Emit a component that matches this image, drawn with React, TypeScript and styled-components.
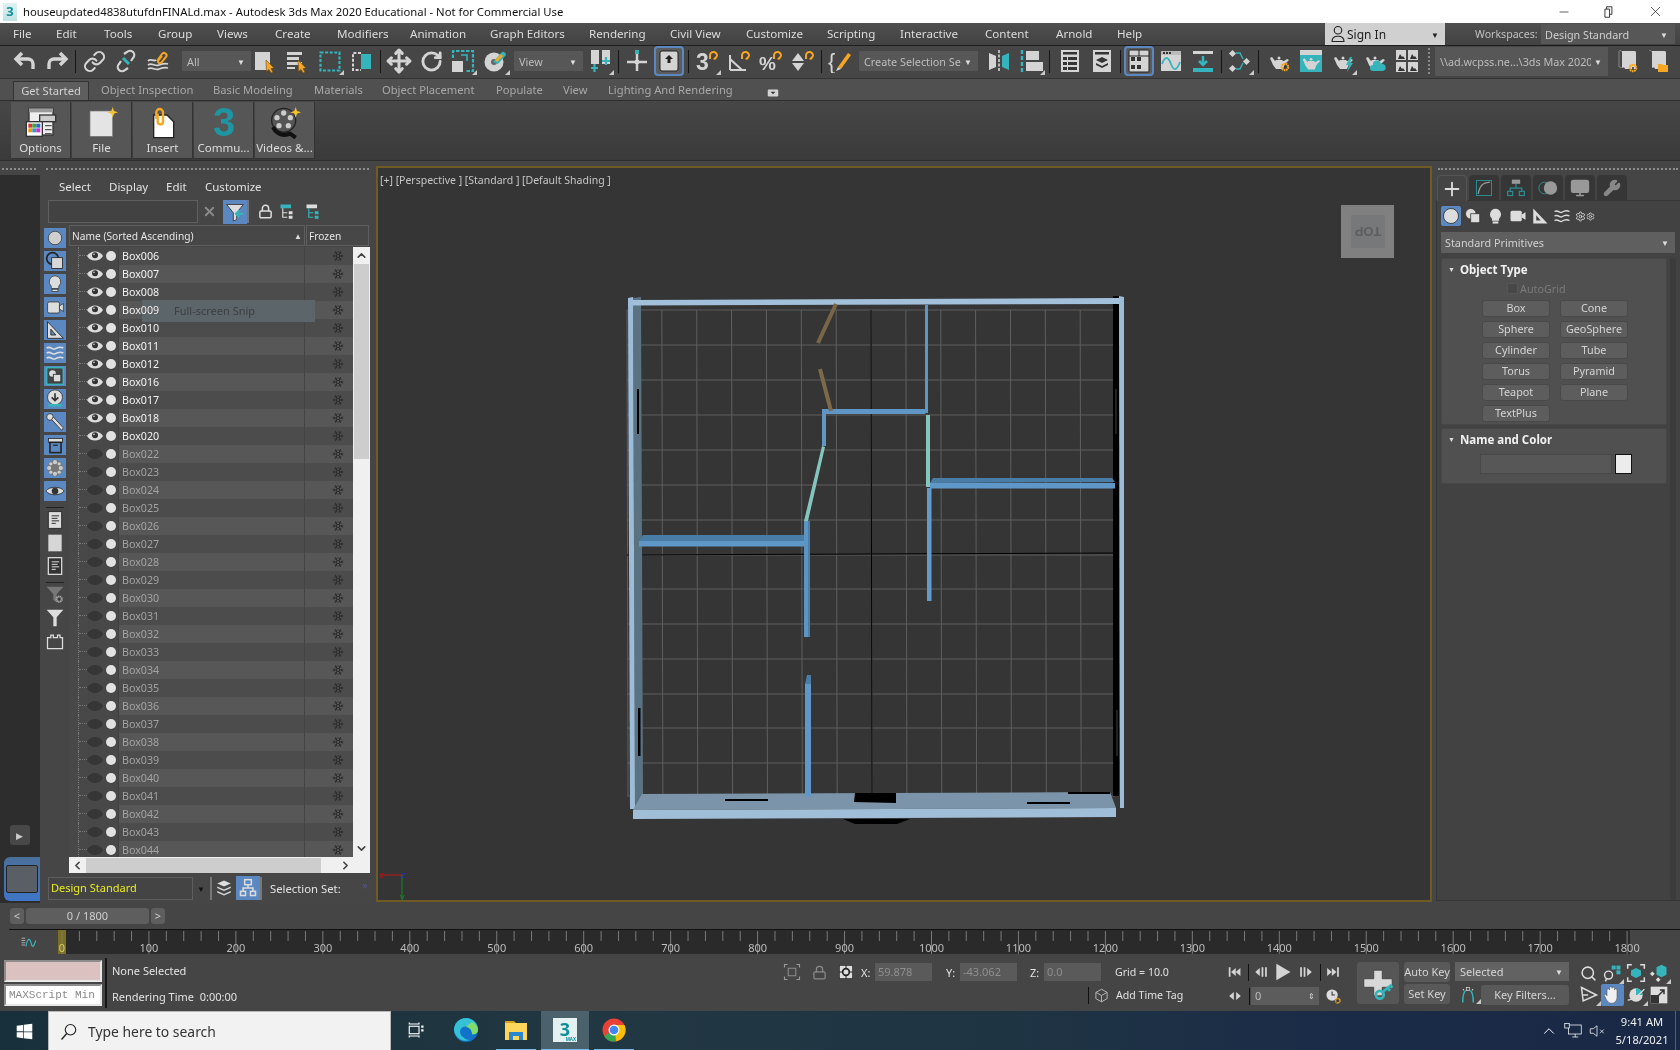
import React from 'react';
import styled, { createGlobalStyle } from 'styled-components';
import { Snowflake, Search, Minus, X, Link as LinkIcon, Move, RotateCw, ChevronUp, ChevronDown, ChevronLeft, ChevronRight, Wrench, Plus, Lock, Settings, Monitor } from 'lucide-react';

const UI = `"Noto Sans", "Open Sans", sans-serif`;
const C = '#d4d4d4';
const T = '#35b5bb';
const O = '#f5a623';

const Global = createGlobalStyle`
  html, body { margin: 0; padding: 0; background: #454545; overflow: hidden; }
  body { font-family: ${UI}; }
  * { box-sizing: border-box; }
`;

const Page = styled.div`
  width: 1680px; height: 1050px; display: flex; flex-direction: column; overflow: hidden; background: #454545;
`;
const IconSvg = styled.svg<{ $s: number }>`
  width: ${p => p.$s}px; height: ${p => p.$s}px; display: block; flex: none;
`;
const Ic = ({ s = 24, children }: { s?: number; children: React.ReactNode }) => (
  <IconSvg $s={s} viewBox="0 0 24 24">{children}</IconSvg>
);

/* ---------- title bar ---------- */
const TitleBar = styled.div`
  height: 23px; background: #fff; display: flex; align-items: center; padding: 0 13px 0 3px; flex: none;
`;
const TitleText = styled.div`
  margin-left: 6px; font-size: 11.3px; color: #111; white-space: nowrap; flex: 1;
`;
const WinBtn = styled.div<{ $ml?: number }>`
  width: 24px; display: flex; justify-content: center; margin-left: ${p => p.$ml ?? 21}px; color: #222;
`;
const Logo3 = styled.div`
  width: 14px; height: 18px; background: linear-gradient(#dff1f1, #bfe3e4); color: #128f99; font: bold 13px/17px ${UI}; text-align: center;
`;

/* ---------- menu ---------- */
const MenuBar = styled.div`
  height: 23px; background: linear-gradient(#4f4f4f, #424242); display: flex; align-items: center; padding-left: 13px; border-bottom: 1px solid #1e1e1e; flex: none;
`;
const MenuItem = styled.div<{ $w: number }>`
  width: ${p => p.$w}px; font-size: 11.6px; color: #dcdcdc; white-space: nowrap; padding-bottom: 2px;
`;
const SignIn = styled.div`
  margin-left: 168px; width: 120px; height: 22px; background: #d0d0d0; color: #222; display: flex; align-items: center; padding-left: 4px; font-size: 12px; align-self: flex-start; flex: none;
`;
const SignCaret = styled.span`
  margin-left: auto; margin-right: 6px; font-size: 8px;
`;
const WorkLabel = styled.div`
  margin-left: 30px; font-size: 10.6px; color: #c0c0c0; white-space: nowrap; width: 66px; flex: none;
`;
const WorkCombo = styled.div`
  width: 134px; height: 20px; background: #575757; color: #cfcfcf; font-size: 10.8px; display: flex; align-items: center; padding: 0 7px 0 4px; justify-content: space-between; flex: none;
`;

/* ---------- main toolbar ---------- */
const ToolBar = styled.div`
  height: 33px; background: #464646; display: flex; align-items: center; gap: 4px; padding: 0 0 2px 11px; flex: none; border-bottom: 1px solid #333;
`;
const Grip = styled.div<{ $ml?: number }>`
  width: 2px; height: 26px; border-left: 2px dotted #8a8a8a; margin-left: ${p => p.$ml ?? 0}px;
`;
const Tool = styled.div<{ $ml?: number; $on?: boolean }>`
  width: 28px; height: 28px; flex: none; display: flex; align-items: center; justify-content: center; margin-left: ${p => p.$ml ?? 0}px; position: relative;
  ${p => p.$on ? 'background:#5c5c5c; outline: 2px solid #5b88c0; outline-offset: -1px; border-radius: 3px;' : ''}
`;
const Corner = styled.span`
  position: absolute; right: 0; bottom: 0; width: 0; height: 0; border-left: 5px solid transparent; border-bottom: 5px solid #c9c9c9;
`;
const Sep = styled.div<{ $ml?: number }>`
  width: 1px; height: 23px; background: #161616; flex: none; margin-left: ${p => p.$ml ?? 0}px;
`;
const Combo = styled.div<{ $w: number; $ml?: number; $h?: number }>`
  width: ${p => p.$w}px; height: ${p => p.$h ?? 20}px; background: #575757; color: #bdbdbd; font-size: 10.8px; display: flex; align-items: center; justify-content: space-between; padding: 0 6px 0 5px; flex: none; border-radius: 1px;
  margin-left: ${p => p.$ml ?? 0}px; margin-right: -4px; white-space: nowrap; overflow: hidden;
`;
const ClipText = styled.span`
  flex: 1; overflow: hidden; white-space: nowrap;
`;
const Caret = styled.span`
  font-size: 8px; color: #ddd; flex: none; margin-left: 3px;
`;
const More = styled.div`
  color: #ccc; font-size: 10px; margin-left: 8px;
`;

/* ---------- ribbon ---------- */
const RibbonTabs = styled.div`
  height: 22px; background: #505050; display: flex; align-items: flex-end; padding-left: 13px; border-bottom: 1px solid #2e2e2e; flex: none;
`;
const RibTab = styled.div<{ $w: number; $on?: boolean }>`
  width: ${p => p.$w}px; height: 19px; font-size: 11.2px; line-height: 18px; white-space: nowrap; color: ${p => p.$on ? '#d2d2d2' : '#a8a8a8'};
  ${p => p.$on ? 'background:#5e5e5e; text-align:center; border: 1px solid #333; border-bottom: none;' : ''}
`;
const RibbonBody = styled.div`
  height: 60px; background: linear-gradient(#474747, #3a3a3a); display: flex; gap: 1px; padding: 1px 0 0 11px; flex: none; border-bottom: 1px solid #2e2e2e;
`;
const RibBtn = styled.div`
  width: 60px; height: 57px; background: #565656; display: flex; flex-direction: column; align-items: center; border-right: 1px solid #333; border-bottom: 1px solid #333;
`;
const RibIcon = styled.div`
  height: 36px; display: flex; align-items: center; justify-content: center; padding-top: 5px;
`;
const RibLabel = styled.div`
  font-size: 11.5px; color: #dedede; margin-top: 2px; white-space: nowrap;
`;

/* ---------- main ---------- */
const Main = styled.div`
  height: 744px; display: flex; flex: none;
`;
const DockL = styled.div`
  width: 371px; display: flex; flex-direction: column; flex: none;
`;
const GripRow = styled.div`
  height: 14px; display: flex; gap: 10px; padding: 7px 2px 0; flex: none;
`;
const GripLine = styled.div<{ $w?: number }>`
  ${p => p.$w ? `width:${p.$w}px;` : 'flex:1;'} height: 2px; border-top: 2px dotted #8e8e8e;
`;
const DockBody = styled.div`
  display: flex; height: 728px;
`;
const DarkStrip = styled.div`
  width: 40px; background: #2d2d2d; display: flex; flex-direction: column; align-items: center; justify-content: flex-end;
`;
const ExpandBtn = styled.div`
  width: 20px; height: 20px; background: #484848; border-radius: 3px; display: flex; align-items: center; justify-content: center; color: #ccc; font-size: 9px; margin-bottom: 12px; margin-left: -1px;
`;
const Thumb = styled.div`
  width: 36px; height: 44px; margin: 0 0 2px 4px; border-radius: 6px 0 0 6px; background: linear-gradient(#4a6f9a, #3f76c6); display: flex; align-items: flex-start; justify-content: center; padding: 8px 0 0 0;
`;
const ThumbInner = styled.div`
  width: 32px; height: 28px; background: #5a5f66; border: 1px solid #222; border-radius: 2px;
`;
const Explorer = styled.div`
  width: 331px; display: flex; flex-direction: column; background: #464646;
`;
const ExpMenu = styled.div`
  height: 23px; display: flex; align-items: center; padding-left: 19px; color: #e2e2e2; font-size: 11.5px; flex: none;
`;
const ExpMenuItem = styled.div<{ $w: number }>`
  width: ${p => p.$w}px;
`;
const SearchRow = styled.div`
  height: 27px; display: flex; align-items: center; padding-left: 8px; flex: none;
`;
const SearchInput = styled.div`
  width: 150px; height: 23px; border: 1px solid #5f5f5f; background: #424242;
`;
const FilterBtn = styled.div`
  width: 24px; height: 24px; background: #5b88c0; display: flex; align-items: center; justify-content: center; margin-left: 4px;
`;
const XBox = styled.div`
  width: 20px; display: flex; justify-content: center; margin-left: 1px; color: #8a8a8a;
`;
const SmallIcon = styled.div<{ $ml: number }>`
  margin-left: ${p => p.$ml}px; display: flex;
`;
const ExpBody = styled.div`
  display: flex; padding-left: 4px; height: 648px; flex: none;
`;
const IconStrip = styled.div`
  width: 22px; display: flex; flex-direction: column; gap: 3px; padding-top: 3px; flex: none;
`;
const StripBtn = styled.div<{ $on?: boolean }>`
  width: 22px; height: 20px; background: ${p => p.$on ? '#5b88c0' : 'transparent'}; display: flex; align-items: center; justify-content: center; flex: none;
`;
const StripSep = styled.div`
  height: 1px; background: #222; margin: 3px 2px -1px;
`;
const Table = styled.div`
  width: 301px; margin-left: 3px; display: flex; flex-direction: column; height: 648px;
`;
const THead = styled.div`
  height: 22px; display: flex; gap: 1px; flex: none;
`;
const TH = styled.div<{ $w: number }>`
  width: ${p => p.$w}px; height: 21px; border: 1px solid #5e5e5e; font-size: 10.2px; color: #e4e4e4; display: flex; align-items: center; padding: 0 2px; justify-content: space-between; background: #474747; white-space: nowrap;
`;
const TMid = styled.div`
  display: flex; height: 610px; flex: none;
`;
const Rows = styled.div`
  width: 284px; overflow: hidden; background: #464646;
`;
const Row = styled.div<{ $alt: boolean }>`
  height: 18px; display: flex; background: ${p => p.$alt ? '#575757' : '#4c4c4c'};
`;
const TreeCell = styled.div`
  width: 50px; background: #484848; display: flex; align-items: center; flex: none; border-right: 1px solid #404040;
`;
const TreeGuide = styled.div`
  width: 9px; margin-left: 9px; align-self: stretch; border-left: 1px dotted #7a7a7a; flex: none;
`;
const TreeDash = styled.div`
  height: 9px; border-bottom: 1px dotted #7a7a7a;
`;
const EyeWrap = styled.div`
  width: 16px; display: flex; justify-content: center; flex: none; margin-top: -1px;
`;
const Dot = styled.div`
  width: 10px; height: 10px; background: #e2e2e2; border-radius: 50%; margin-left: 3px; margin-top: -1px; flex: none;
`;
const NameCell = styled.div<{ $dim: boolean }>`
  width: 186px; padding-left: 3px; font-size: 10.7px; line-height: 18px; color: ${p => p.$dim ? '#a2a2a2' : '#f2f2f2'}; border-right: 1px solid #444; flex: none;
`;
const FrozenCell = styled.div`
  flex: 1; display: flex; align-items: center; padding-left: 27px;
`;
const VScroll = styled.div`
  width: 17px; background: #f0f0f0; display: flex; flex-direction: column; color: #444; align-items: center; flex: none;
`;
const VTrackTop = styled.div`
  height: 17px; display: flex; align-items: center; justify-content: center; flex: none;
`;
const VThumb = styled.div`
  width: 15px; height: 195px; background: #cdcdcd; flex: none;
`;
const VFill = styled.div`
  flex: 1;
`;
const HScroll = styled.div`
  height: 16px; background: #f0f0f0; display: flex; align-items: center; color: #444; flex: none;
`;
const HThumb = styled.div`
  width: 235px; height: 15px; background: #cdcdcd; flex: none;
`;
const HEnd = styled.div<{ $w: number }>`
  width: ${p => p.$w}px; display: flex; justify-content: center; flex: none;
`;
const ExpFoot = styled.div`
  height: 24px; margin-top: 3px; display: flex; align-items: center; padding-left: 8px; flex: none;
`;
const LayerInput = styled.div`
  width: 145px; height: 23px; border: 1px solid #5e5e5e; color: #eaea1e; font-size: 11px; line-height: 19px; padding-left: 2px; background: #444;
`;
const FootCaret = styled.div`
  color: #111; font-size: 8px; margin-left: 4px; width: 13px;
`;
const FootSep = styled.div`
  width: 2px; height: 23px; background: #777; flex: none;
`;
const FootBtn = styled.div<{ $on?: boolean }>`
  width: 24px; height: 24px; background: ${p => p.$on ? '#5b88c0' : 'transparent'}; display: flex; align-items: center; justify-content: center; flex: none;
`;
const FootText = styled.div`
  color: #e2e2e2; font-size: 11.3px; margin-left: 8px; white-space: nowrap; width: 70px;
`;
const FootMore = styled.div`
  color: #55558f; font-size: 11px; margin-left: 22px; margin-top: -8px;
`;
const Snip = styled.div`
  position: absolute; left: 142px; top: 300px; width: 173px; height: 22px;
`;
const SnipShade = styled.div`
  position: absolute; inset: 0; background: #5b656a; mix-blend-mode: lighten;
`;
const SnipText = styled.div`
  position: relative; color: #3e4042; font-size: 11px; line-height: 22px; padding-left: 32px;
`;

/* ---------- viewport ---------- */
const Viewport = styled.div`
  width: 1056px; height: 736px; margin: 5px 0 0 5px; border: 2px solid #6e5a23; background: #353535; position: relative; flex: none;
`;
const VpSvg = styled.svg`
  width: 1052px; height: 732px; display: block;
`;
const VpLabel = styled.div`
  position: absolute; left: 2px; top: 5px; color: #c6c6c6; font-size: 10.5px; white-space: nowrap;
`;

/* ---------- command panel ---------- */
const Panel = styled.div`
  width: 244px; margin-left: 4px; display: flex; flex-direction: column; flex: none;
`;
const PanelTabs = styled.div`
  height: 25px; display: flex; gap: 2px; padding-left: 1px; flex: none;
`;
const PanelTab = styled.div<{ $on?: boolean }>`
  width: 30px; height: 26px; border-radius: 4px 4px 0 0; background: ${p => p.$on ? '#444' : '#363636'}; display: flex; align-items: center; justify-content: center; flex: none;
  ${p => p.$on ? 'border: 1px solid #555; border-bottom: none; z-index: 1;' : ''}
`;
const PanelBody = styled.div`
  height: 701px; background: #424242; border: 1px solid #363636; border-right: none; padding: 5px 0 0 4px; display: flex; flex-direction: column; flex: none;
`;
const SubIcons = styled.div`
  display: flex; height: 20px; align-items: center; flex: none;
`;
const SubIcon = styled.div<{ $on?: boolean }>`
  width: 20px; height: 20px; margin-right: 2.3px; display: flex; align-items: center; justify-content: center; flex: none; border-radius: 2px; background: ${p => p.$on ? '#5b88c0' : 'transparent'};
`;
const TypeCombo = styled.div`
  width: 234px; height: 21px; background: #5f5f5f; color: #d0d0d0; font-size: 10.8px; display: flex; align-items: center; justify-content: space-between; padding: 0 6px 0 4px; margin-top: 6px; flex: none;
`;
const RollArea = styled.div`
  display: flex; flex: 1; gap: 3px;
`;
const RollCol = styled.div`
  width: 226px; display: flex; flex-direction: column; flex: none;
`;
const RollScroll = styled.div`
  width: 6px; margin-top: 5px; background: #3b3b3b; border-radius: 3px; flex: none;
`;
const Rollout = styled.div<{ $h: number; $mt: number }>`
  width: 226px; height: ${p => p.$h}px; margin-top: ${p => p.$mt}px; background: #505050; border: 1px solid #474747; border-radius: 2px; flex: none;
`;
const RollHead = styled.div`
  height: 20px; display: flex; align-items: center; padding-left: 6px; color: #f0f0f0; font-size: 11.5px; font-weight: 700;
`;
const RollTri = styled.span`
  font-size: 7px; margin-right: 5px; color: #ddd;
`;
const RollDots = styled.span`
  margin-left: auto; margin-right: 8px; width: 6px; height: 6px; background-image: radial-gradient(#888 40%, transparent 45%); background-size: 2px 2px;
`;
const AutoGrid = styled.div`
  display: flex; align-items: center; height: 18px; padding-left: 65px; color: #7a7a7a; font-size: 10.8px; gap: 2px;
`;
const Check = styled.div`
  width: 11px; height: 11px; background: #484848; border: 1px solid #555;
`;
const PrimGrid = styled.div`
  display: grid; grid-template-columns: 68px 68px; column-gap: 10px; row-gap: 4px; padding: 3px 0 0 40px;
`;
const Prim = styled.div`
  height: 17px; background: #5d5d5d; border: 1px solid #494949; border-radius: 3px; color: #d4d4d4; font-size: 10.8px; line-height: 14px; text-align: center;
`;
const NameRow = styled.div`
  display: flex; padding: 5px 0 0 38px; gap: 3px;
`;
const NameInput = styled.div`
  width: 132px; height: 20px; background: #575757; border: 1px solid #484848;
`;
const Swatch = styled.div`
  width: 17px; height: 20px; background: #ececec; border: 1px solid #111;
`;

/* ---------- timeline ---------- */
const SliderRow = styled.div`
  height: 24px; display: flex; padding: 3px 0 0 10px; gap: 2px; flex: none;
`;
const SlideBtn = styled.div<{ $w: number }>`
  width: ${p => p.$w}px; height: 16px; background: #5e5e5e; border-radius: 3px; color: #cfcfcf; font-size: 11px; line-height: 15px; text-align: center;
`;
const TrackRow = styled.div`
  height: 25px; margin-left: 9px; border-top: 1px solid #111; display: flex; flex: none;
`;
const TrackLeft = styled.div`
  width: 49px; display: flex; align-items: center; padding-left: 11px; flex: none;
`;
const TrackSvg = styled.svg`
  width: 1572px; height: 24px; display: block; flex: none; background: #2a2a2a; overflow: visible;
`;

/* ---------- status ---------- */
const Status = styled.div`
  height: 57px; display: flex; flex: none; background: #454545;
`;
const Listener = styled.div`
  width: 98px; margin: 6px 0 0 4px; display: flex; flex-direction: column; gap: 2px; flex: none;
`;
const Pink = styled.div`
  height: 22px; background: #dcc1c1; border: 2px solid #8c8c8c; border-right-color: #e8e8e8; border-bottom-color: #e8e8e8;
`;
const Mini = styled.div`
  height: 22px; background: #fff; border: 2px solid #8c8c8c; border-right-color: #e8e8e8; border-bottom-color: #e8e8e8; padding-left: 3px;
`;
const MiniText = styled.div`
  width: 86px; font: 11px/18px "Liberation Mono", monospace; color: #8a8a8a; overflow: hidden; white-space: nowrap;
`;
const StatSep = styled.div`
  width: 2px; height: 50px; background: #151515; margin: 4px 0 0 3px; flex: none;
`;
const Info = styled.div`
  width: 673px; padding: 9px 0 0 5px; font-size: 11px; color: #e2e2e2; display: flex; flex-direction: column; gap: 11px; flex: none;
`;
const Coord = styled.div`
  width: 445px; display: flex; flex-direction: column; flex: none;
`;
const CoordRow = styled.div`
  height: 27px; display: flex; align-items: center; padding-top: 9px; flex: none;
`;
const CoordIcon = styled.div`
  width: 24px; margin-right: 3px; display: flex; justify-content: center; flex: none;
`;
const CoordLabel = styled.div<{ $ml?: number }>`
  color: #e0e0e0; font-size: 11px; width: 14px; margin-left: ${p => p.$ml ?? 0}px; flex: none;
`;
const CoordField = styled.div`
  width: 57px; height: 18px; background: #5a5a5a; color: #8f8f8f; font-size: 11px; line-height: 18px; padding-left: 3px; flex: none;
`;
const GridLabel = styled.div<{ $ml: number }>`
  color: #e0e0e0; font-size: 10.6px; margin-left: ${p => p.$ml}px; white-space: nowrap;
`;
const CoordRow2 = styled.div`
  display: flex; align-items: center; height: 24px; padding-left: 308px; margin-top: 2px; flex: none;
`;
const TagSep = styled.div<{ $ml?: number }>`
  width: 1px; height: 17px; background: #111; flex: none; margin-left: ${p => p.$ml ?? 0}px;
`;
const Play = styled.div`
  width: 122px; display: flex; flex-direction: column; flex: none;
`;
const PlayRow = styled.div`
  display: flex; align-items: center; height: 22px; margin-top: 7px; flex: none;
`;
const PlayRow2 = styled.div`
  display: flex; align-items: center; height: 20px; margin-top: 3px; flex: none;
`;
const PlayBtn = styled.div<{ $w: number }>`
  width: ${p => p.$w}px; display: flex; justify-content: center; flex: none;
`;
const Spin = styled.div`
  width: 68px; height: 18px; background: #5c5c5c; color: #bdbdbd; font-size: 11px; line-height: 18px; padding: 0 4px; display: flex; justify-content: space-between; flex: none; margin-left: 1px;
`;
const KeyBig = styled.div`
  width: 42px; height: 42px; background: #565656; border-radius: 3px; margin: 8px 0 0 10px; display: flex; align-items: center; justify-content: center; flex: none;
`;
const KeyCol = styled.div`
  width: 46px; margin: 8px 0 0 5px; display: flex; flex-direction: column; gap: 2px; flex: none;
`;
const KeyBtn = styled.div`
  height: 20px; background: #595959; border-radius: 3px; color: #d4d4d4; font-size: 11px; line-height: 19px; text-align: center; white-space: nowrap;
`;
const SelCol = styled.div`
  width: 114px; margin: 8px 0 0 5px; display: flex; flex-direction: column; gap: 4px; flex: none;
`;
const SelCombo = styled.div`
  height: 19px; background: #626262; color: #d4d4d4; font-size: 11px; display: flex; align-items: center; justify-content: space-between; padding: 0 6px 0 5px;
`;
const SelRow = styled.div`
  display: flex; align-items: center; height: 20px;
`;
const CurveBtn = styled.div`
  width: 26px; display: flex; justify-content: center; flex: none; position: relative;
`;
const KeyFilters = styled.div`
  width: 88px; height: 20px; background: #595959; border-radius: 3px; color: #d4d4d4; font-size: 11px; line-height: 19px; text-align: center;
`;
const Nav = styled.div`
  display: grid; grid-template-columns: repeat(4, 23.5px); grid-auto-rows: 22px; margin: 8px 0 0 8px; flex: none;
`;
const NavBtn = styled.div<{ $on?: boolean }>`
  display: flex; align-items: center; justify-content: center; background: ${p => p.$on ? '#5b88c0' : 'transparent'}; border-radius: 2px; position: relative;
`;

/* ---------- taskbar ---------- */
const Taskbar = styled.div`
  height: 40px; background: linear-gradient(90deg, #17303b 0, #213742 35%, #1f3443 60%, #1a2b48 80%, #192845 100%); display: flex; align-items: center; flex: none; color: #fff;
`;
const Start = styled.div`
  width: 48px; display: flex; justify-content: center; flex: none;
`;
const SearchBox = styled.div`
  width: 343px; height: 40px; background: #f2f2f2; border: 1px solid #b8b8b8; border-bottom: none; display: flex; align-items: center; padding-left: 11px; color: #333; font-size: 13.9px; gap: 10px; flex: none;
`;
const TaskItem = styled.div<{ $w: number; $on?: boolean; $run?: boolean }>`
  width: ${p => p.$w}px; height: 40px; flex: none; display: flex; align-items: center; justify-content: center;
  background: ${p => p.$on ? '#4b616b' : 'transparent'};
  border-bottom: 2px solid ${p => p.$run ? '#76b9ed' : 'transparent'};
`;
const Logo3Big = styled.div`
  width: 24px; height: 24px; background: #e4f1f1; color: #0d8e9a; font: 700 18px/22px ${UI}; text-align: center; position: relative;
`;
const MaxTag = styled.span`
  position: absolute; right: 1px; bottom: 0; font: 700 4.5px/5px ${UI}; color: #0d8e9a;
`;
const Tray = styled.div`
  margin-left: auto; display: flex; align-items: center; height: 40px; border-right: 1px solid #4a5f80; margin-right: 4px;
`;
const TrayIcon = styled.div`
  width: 24px; display: flex; justify-content: center; flex: none;
`;
const Clock = styled.div`
  width: 66px; font-size: 11.2px; line-height: 18px; text-align: center; color: #f0f0f0; white-space: nowrap;
`;

/* ---------- icons ---------- */
const cursor = <path d="M13 11l8 8-3 .5 2 3.5-2 1-2-3.5-2.5 2z" fill={O} stroke="#6b4a10" strokeWidth=".6" />;
const arc = <path d="M15 10V6.5a3.5 3.5 0 0 1 7 0c0 2-2 2.5-3 4" fill="none" stroke={O} strokeWidth="2" />;
const Teapot = ({ f = C }: { f?: string }) => (
  <g fill={f}>
    <path d="M3 9l2-1 3 4h9l3-2 2 1-4 4-2 5H9L6 16z" />
    <circle cx="12" cy="9" r="1.5" />
    <path d="M9 11h6l1 1H8z" />
  </g>
);
const Gear = ({ x, y, c = O }: { x: number; y: number; c?: string }) => (
  <g>
    <circle cx={x} cy={y} r="3.2" fill="none" stroke={c} strokeWidth="2.2" strokeDasharray="1.6 .6" />
    <circle cx={x} cy={y} r="1" fill="#333" />
  </g>
);

const tools = {
  undo: <Ic><path d="M9 4L3 10l6 6" fill="none" stroke={C} strokeWidth="3.4" /><path d="M4 10h11a5 5 0 0 1 5 5v5" fill="none" stroke={C} strokeWidth="3.4" /></Ic>,
  redo: <Ic><path d="M15 4l6 6-6 6" fill="none" stroke={C} strokeWidth="3.4" /><path d="M20 10H9a5 5 0 0 0-5 5v5" fill="none" stroke={C} strokeWidth="3.4" /></Ic>,
  link: <LinkIcon size={23} color={C} strokeWidth={2.2} />,
  unlink: <Ic><g fill="none" stroke={C} strokeWidth="2.2"><path d="M10 5l3-2a4 4 0 0 1 6 6l-2 3" /><path d="M14 19l-3 2a4 4 0 0 1-6-6l2-3" /></g><path d="M9 9l6 6" stroke={T} strokeWidth="3" /></Ic>,
  bind: <Ic><g fill="none" stroke={C} strokeWidth="1.8"><path d="M2 12c3-3 5 1 8-1" /><path d="M2 16c4-3 7 2 11 0 3-1 6-2 9-1" /><path d="M2 20c4-3 7 2 11 0 3-1 6-2 9-1" /></g><path d="M11 12l5-7a2.500 2.500 0 0 1 4 3l-5 6a2 2 0 0 1-3-2l4-5" fill="none" stroke={O} strokeWidth="2" /></Ic>,
  select: <Ic><rect x="2" y="3" width="15" height="18" fill={C} />{cursor}</Ic>,
  byName: <Ic><g fill={C}><rect x="2" y="3" width="15" height="3" /><rect x="2" y="8" width="12" height="3" /><rect x="2" y="13" width="15" height="3" /><rect x="2" y="18" width="8" height="2" /></g>{cursor}</Ic>,
  region: <Ic><rect x="2.500" y="3.500" width="19" height="18" fill="none" stroke={T} strokeWidth="2.2" strokeDasharray="3 1.600" /></Ic>,
  cross: <Ic><path d="M11 4H3v17h8" fill="none" stroke={C} strokeWidth="2" strokeDasharray="3 1.600" /><rect x="11" y="5" width="10" height="15" fill={T} /></Ic>,
  move: <Move size={26} color={C} strokeWidth={2.8} />,
  rotate: <RotateCw size={23} color={C} strokeWidth={3} />,
  scale: <Ic><path d="M2 9V2h20v20h-8" fill="none" stroke={T} strokeWidth="2.2" strokeDasharray="3.500 1.500" /><rect x="1" y="12" width="11" height="11" fill={C} /><path d="M10 6h6v6" fill="none" stroke={T} strokeWidth="1.600" /></Ic>,
  place: <Ic><circle cx="10" cy="13" r="9.500" fill={C} /><circle cx="10" cy="13" r="3" fill="#666" /><path d="M9 13l9-10a3 3 0 0 1 4 3l-8 9z" fill={T} /><path d="M11 11l6-6 2 2-6 6z" fill={O} /></Ic>,
  pivot: <Ic><rect x="3" y="1" width="8" height="14" fill={C} /><rect x="14" y="1" width="8" height="14" fill={C} /><path d="M6.500 15v8M3 19h7" stroke={T} strokeWidth="2.200" /><path d="M18 8v8M14 12h8" stroke={T} strokeWidth="2.200" /></Ic>,
  manip: <Ic><path d="M12 4v18M2 13h20" stroke={C} strokeWidth="2.500" /><rect x="10" y="1" width="4" height="4" fill={T} /><rect x="10" y="11" width="4" height="4" fill={C} /></Ic>,
  key: <Ic><rect x="3" y="2" width="18" height="20" rx="2" fill="#d4d4d4" stroke="#222" strokeWidth="1" /><path d="M12 6l4 4h-2.500v4h-3v-4H8z" fill="#222" /></Ic>,
  snap: <Ic><text x="1" y="21" fontSize="23" fontWeight="700" fill={C} fontFamily="Liberation Sans">3</text>{arc}</Ic>,
  angle: <Ic><path d="M3 21V6M3 21h16M3 10l12 11" fill="none" stroke={C} strokeWidth="2" />{arc}</Ic>,
  percent: <Ic><text x="0" y="21" fontSize="19" fontWeight="700" fill={C} fontFamily="Liberation Sans">%</text>{arc}</Ic>,
  spinner: <Ic><path d="M7 4l6 8H1zM1 14h12l-6 8z" fill={C} />{arc}</Ic>,
  brace: <Ic><text x="0" y="20" fontSize="22" fill={C} fontFamily="Liberation Sans">{'{'}</text><path d="M10 18L20 4l3 2-10 14z" fill={O} /><path d="M8 22l2-4 3 2z" fill={C} /></Ic>,
  mirror: <Ic><path d="M2 4l7 3v11l-7 3z" fill={C} /><path d="M22 4l-7 3v11l7 3z" fill={T} /><path d="M12 1v22" stroke={C} strokeWidth="1.600" strokeDasharray="3 1.500" /></Ic>,
  align: <Ic><path d="M3 1v22" stroke={T} strokeWidth="2.400" strokeDasharray="4 2" /><rect x="7" y="2" width="13" height="9" fill={C} /><rect x="7" y="13" width="17" height="9" fill={C} /></Ic>,
  layer: <Ic><rect x="3" y="1" width="18" height="22" fill={C} /><g fill="#333"><rect x="5" y="3" width="14" height="2.500" /><rect x="5" y="8" width="4" height="3" /><rect x="10" y="8" width="9" height="3" /><rect x="5" y="13" width="4" height="3" /><rect x="10" y="13" width="9" height="3" /><rect x="5" y="18" width="4" height="3" /><rect x="10" y="18" width="9" height="3" /></g></Ic>,
  ribbon: <Ic><rect x="3" y="1" width="18" height="22" fill={C} /><g fill="#333"><rect x="5" y="3" width="14" height="2.500" /><path d="M12 8l6 3-6 3-6-3zM6 14l6 3 6-3v2l-6 3-6-3z" /></g></Ic>,
  schem: <Ic><rect x="2" y="1" width="20" height="22" rx="1" fill={C} stroke="#222" /><g fill="#333"><rect x="4" y="8" width="4" height="4" /><rect x="10" y="8" width="4" height="4" /><rect x="4" y="16" width="4" height="4" /><rect x="10" y="16" width="4" height="4" /></g><path d="M12 1v6h10M2 7h10" stroke="#222" fill="none" /></Ic>,
  curve: <Ic><rect x="2" y="2" width="20" height="20" fill={C} /><rect x="2" y="2" width="20" height="4" fill="#bbb" /><g fill="#333"><rect x="4" y="3" width="2" height="2" /><rect x="7" y="3" width="2" height="2" /><rect x="10" y="3" width="2" height="2" /></g><path d="M3 15c3-8 6-8 9 0s6 6 9-2" fill="none" stroke={T} strokeWidth="1.800" /></Ic>,
  dope: <Ic><rect x="2" y="2" width="20" height="3" fill={C} /><path d="M12 7v8M8 12l4 4 4-4" fill="none" stroke={T} strokeWidth="2.500" /><rect x="2" y="19" width="20" height="4" fill={T} /></Ic>,
  nodes: <Ic><g fill={C}><rect x="2" y="2" width="5" height="5" transform="rotate(45 4.500 4.500)" /><rect x="2" y="17" width="5" height="5" transform="rotate(45 4.500 19.500)" /><rect x="16" y="10" width="5" height="5" transform="rotate(45 18.500 12.500)" /></g><path d="M8 4h4l3 6M8 20h4l3-6" fill="none" stroke={T} strokeWidth="1.400" /></Ic>,
  teaGear: <Ic><Teapot /><Gear x={18} y={18} /></Ic>,
  teaWin: <Ic><rect x="1" y="1" width="22" height="22" fill={T} /><rect x="1" y="1" width="22" height="5" fill={C} /><g transform="translate(1 2) scale(.92)"><Teapot /></g></Ic>,
  teaBolt: <Ic><Teapot /><path d="M19 8l-4 8h3l-2 7 6-9h-3l2-6z" fill={T} /></Ic>,
  teaCloud: <Ic><Teapot /><path d="M10 22a3 3 0 0 1 0-6 4 4 0 0 1 8-1 3.500 3.500 0 0 1 2 7z" fill={T} /></Ic>,
  frames: <Ic><g fill={C}><rect x="1" y="1" width="10" height="10" /><rect x="13" y="1" width="10" height="10" /><rect x="1" y="13" width="10" height="10" /><rect x="13" y="13" width="10" height="10" /></g><g fill="#333"><path d="M3 10l2-5 2 3 1-1 2 3zM15 10l2-5 2 3 1-1 2 3zM3 22l2-5 2 3 1-1 2 3zM15 22l2-5 2 3 1-1 2 3z" /></g></Ic>,
  sceneGear: <Ic><path d="M3 2c2-1 3 0 3 2v15c2-1 3 0 3 1h11V4c0-2-1-2-2-2z" fill={C} /><path d="M3 2v16c1 0 2 0 3 1" fill="none" stroke="#888" /><Gear x={17} y={19} /></Ic>,
  sceneBox: <Ic><path d="M3 2c2-1 3 0 3 2v15c2-1 3 0 3 1h11V4c0-2-1-2-2-2z" fill={C} /><path d="M12 15h4l1 1h5v7H12z" fill={O} /></Ic>,
};

const eyeOn = (
  <Ic s={16}><path d="M0 12C5 3 19 3 24 12 19 21 5 21 0 12z" fill="#dcdcdc" /><circle cx="12" cy="11" r="4.500" fill="#333" /><circle cx="10.500" cy="9.500" r="1.200" fill="#dcdcdc" /></Ic>
);
const eyeOff = <Ic s={16}><path d="M0 12C5 2 19 2 24 12 19 22 5 22 0 12z" fill="#363636" /></Ic>;

const stripIcons: React.ReactNode[] = [
  <Ic s={18}><circle cx="12" cy="12" r="9" fill="#cfcfcf" stroke="#333" /></Ic>,
  <Ic s={20}><circle cx="9" cy="9" r="7" fill="none" stroke="#222" strokeWidth="2" /><rect x="8" y="8" width="13" height="13" fill="#d8d8d8" stroke="#222" /></Ic>,
  <Ic s={18}><path d="M12 1a8 8 0 0 1 5 14v3H7v-3a8 8 0 0 1 5-14z" fill="#ddd" stroke="#333" /><rect x="8" y="19" width="8" height="3" fill="#ddd" stroke="#333" /></Ic>,
  <Ic s={19}><rect x="2" y="5" width="15" height="14" rx="2" fill="#ddd" stroke="#333" /><path d="M17 10l5-3v10l-5-3z" fill="#ddd" stroke="#333" /></Ic>,
  <Ic s={20}><path d="M3 2l19 20H3z" fill="#ddd" stroke="#222" /><path d="M7 11l6 7H7z" fill="#5b88c0" stroke="#222" /></Ic>,
  <Ic s={20}><g fill="none" stroke="#ddd" strokeWidth="1.800"><path d="M2 6c5-3 7 3 10 1s6-3 10-1" /><path d="M2 12c5-3 7 3 10 1s6-3 10-1" /><path d="M2 18c5-3 7 3 10 1s6-3 10-1" /></g></Ic>,
  <Ic s={20}><rect x="2" y="2" width="20" height="20" fill="#444" stroke={T} strokeWidth="1.800" /><circle cx="9" cy="9" r="4" fill="#ddd" /><rect x="10" y="10" width="9" height="9" fill="#ddd" stroke="#333" /></Ic>,
  <Ic s={20}><circle cx="12" cy="10" r="9" fill="#ddd" stroke="#333" /><path d="M12 5v8M8 10l4 4 4-4" fill="none" stroke="#333" strokeWidth="2" /><rect x="4" y="18" width="16" height="3" fill={T} /></Ic>,
  <Ic s={20}><circle cx="6" cy="6" r="4" fill="#ddd" stroke="#333" /><path d="M8 9l12 13 2-3L10 6z" fill="#ddd" stroke="#333" /></Ic>,
  <Ic s={19}><rect x="3" y="3" width="18" height="5" fill="#ddd" stroke="#222" /><rect x="5" y="8" width="14" height="13" fill="#5b88c0" stroke="#222" strokeWidth="2" /><rect x="9" y="11" width="6" height="1.500" fill="#222" /></Ic>,
  <Ic s={20}><circle cx="12" cy="12" r="9.500" fill="#777" /><g fill="#ccc"><circle cx="12" cy="5" r="2.500" /><circle cx="12" cy="19" r="2.500" /><circle cx="5" cy="12" r="2.500" /><circle cx="19" cy="12" r="2.500" /><circle cx="7" cy="7" r="2" /><circle cx="17" cy="7" r="2" /><circle cx="7" cy="17" r="2" /><circle cx="17" cy="17" r="2" /></g></Ic>,
  <Ic s={20}><path d="M1 12c4-6 18-6 22 0-4 6-18 6-22 0z" fill="#ddd" stroke="#222" /><circle cx="12" cy="12" r="4" fill="#333" /></Ic>,
];

const Play1 = ({ d }: { d: string }) => <Ic s={14}><path d={d} fill={C} /></Ic>;

const menus: [string, number][] = [['File', 43], ['Edit', 48], ['Tools', 54], ['Group', 59], ['Views', 58], ['Create', 62], ['Modifiers', 73], ['Animation', 80], ['Graph Editors', 99], ['Rendering', 81], ['Civil View', 76], ['Customize', 81], ['Scripting', 73], ['Interactive', 85], ['Content', 71], ['Arnold', 61], ['Help', 40]];
const ribTabs: [string, number][] = [['Object Inspection', 112], ['Basic Modeling', 101], ['Materials', 68], ['Object Placement', 114], ['Populate', 67], ['View', 45], ['Lighting And Rendering', 158]];
const rowNames = ['006', '007', '008', '009', '010', '011', '012', '016', '017', '018', '020', ...Array.from({ length: 23 }, (_, i) => String(22 + i).padStart(3, '0'))];
const prims = ['Box', 'Cone', 'Sphere', 'GeoSphere', 'Cylinder', 'Tube', 'Torus', 'Pyramid', 'Teapot', 'Plane', 'TextPlus'];
const gridX = Array.from({ length: 15 }, (_, i) => 627 + i * 34.86);
const gridY = [309, 344, 379, 414, 449, 484, 519, 554, 588, 623, 658, 693, 727, 762, 795];
const ticks = Array.from({ length: 91 }, (_, i) => i);

export default function App() {
  return (
    <Page>
      <Global />
      <TitleBar>
        <Logo3>3</Logo3>
        <TitleText>houseupdated4838utufdnFINALd.max - Autodesk 3ds Max 2020 Educational - Not for Commercial Use</TitleText>
        <WinBtn><Minus size={14} strokeWidth={1.2} /></WinBtn>
        <WinBtn><Ic s={14}><path d="M8 7V3h9v13h-4M5 7h8v14H5z" fill="none" stroke="#222" strokeWidth="1.500" /></Ic></WinBtn>
        <WinBtn $ml={22}><X size={17} strokeWidth={1} /></WinBtn>
      </TitleBar>

      <MenuBar>
        {menus.map(([m, w]) => <MenuItem key={m} $w={w}>{m}</MenuItem>)}
        <SignIn>
          <Ic s={18}><circle cx="12" cy="7" r="5" fill="none" stroke="#222" strokeWidth="1.500" /><path d="M4 22c0-6 4-7 8-7s8 1 8 7z" fill="none" stroke="#222" strokeWidth="1.500" /></Ic>
          Sign In<SignCaret>▼</SignCaret>
        </SignIn>
        <WorkLabel>Workspaces:</WorkLabel>
        <WorkCombo>Design Standard<Caret>▼</Caret></WorkCombo>
      </MenuBar>

      <ToolBar>
        <Tool>{tools.undo}</Tool><Tool>{tools.redo}</Tool><Sep />
        <Tool>{tools.link}</Tool><Tool>{tools.unlink}</Tool><Tool>{tools.bind}</Tool>
        <Combo $w={69} $ml={6}>All<Caret>▼</Caret></Combo>
        <Tool>{tools.select}</Tool><Tool>{tools.byName}</Tool>
        <Tool $ml={1}>{tools.region}<Corner /></Tool><Tool>{tools.cross}</Tool><Sep />
        <Tool>{tools.move}</Tool><Tool>{tools.rotate}</Tool><Tool>{tools.scale}<Corner /></Tool><Tool $ml={1}>{tools.place}<Corner /></Tool>
        <Combo $w={69}>View<Caret>▼</Caret></Combo>
        <Tool $ml={3}>{tools.pivot}<Corner /></Tool><Sep />
        <Tool>{tools.manip}</Tool><Tool $on>{tools.key}</Tool><Sep $ml={1} />
        <Tool>{tools.snap}<Corner /></Tool><Tool>{tools.angle}</Tool><Tool>{tools.percent}</Tool><Tool>{tools.spinner}</Tool><Sep />
        <Tool>{tools.brace}</Tool>
        <Combo $w={119} $ml={1}>Create Selection Se<Caret>▼</Caret></Combo>
        <Tool $ml={7}>{tools.mirror}</Tool><Tool>{tools.align}<Corner /></Tool><Sep />
        <Tool $ml={2}>{tools.layer}</Tool><Tool>{tools.ribbon}</Tool><Sep />
        <Tool $on>{tools.schem}</Tool><Tool>{tools.curve}</Tool><Tool>{tools.dope}</Tool><Sep />
        <Tool>{tools.nodes}<Corner /></Tool><Sep />
        <Tool $ml={2}>{tools.teaGear}</Tool><Tool>{tools.teaWin}</Tool><Tool>{tools.teaBolt}<Corner /></Tool><Tool>{tools.teaCloud}</Tool><Tool>{tools.frames}</Tool>
        <Grip $ml={3} />
        <Combo $w={173} $h={29} $ml={1}><ClipText>\\ad.wcpss.ne...\3ds Max 2020</ClipText><Caret>▼</Caret></Combo>
        <Tool $ml={6}>{tools.sceneGear}</Tool><Tool $ml={-2}>{tools.sceneBox}</Tool>
        <More>»</More>
      </ToolBar>

      <RibbonTabs>
        <RibTab $w={76} $on>Get Started</RibTab>
        <RibTab $w={12} />
        {ribTabs.map(([t, w]) => <RibTab key={t} $w={w}>{t}</RibTab>)}
        <Ic s={14}><rect x="3" y="6" width="18" height="12" rx="2" fill={C} /><path d="M8 10h8l-4 4z" fill="#333" /></Ic>
      </RibbonTabs>
      <RibbonBody>
        <RibBtn>
          <RibIcon>
            <Ic s={32}><rect x="3" y="1" width="18" height="20" fill="#eee" stroke="#333" /><rect x="3" y="1" width="18" height="3" fill="#999" /><rect x="11" y="6" width="12" height="5" fill="#ccc" stroke="#333" /><rect x="1" y="11" width="12" height="11" fill="#fff" stroke="#333" /><g><rect x="2.500" y="12.500" width="3" height="3" fill="#d33" /><rect x="5.500" y="12.500" width="3" height="3" fill="#3a3" /><rect x="8.500" y="12.500" width="3" height="3" fill="#36c" /><rect x="2.500" y="16" width="3" height="3" fill="#e90" /><rect x="5.500" y="16" width="3" height="3" fill="#39c" /><rect x="8.500" y="16" width="3" height="3" fill="#c3c" /></g><path d="M15 14h5M15 17h5M15 20h5" stroke="#555" /></Ic>
          </RibIcon>
          <RibLabel>Options</RibLabel>
        </RibBtn>
        <RibBtn>
          <RibIcon>
            <Ic s={32}><rect x="3" y="3" width="17" height="19" fill="#e4e4e4" stroke="#777" strokeWidth=".5" /><path d="M20 0l1 3 3 1-3 1-1 3-1-3-3-1 3-1z" fill="#f2c230" /></Ic>
          </RibIcon>
          <RibLabel>File</RibLabel>
        </RibBtn>
        <RibBtn>
          <RibIcon>
            <Ic s={32}><path d="M5 6h10l5 5v12H5z" fill="#fff" stroke="#222" /><path d="M7 9V4a2.500 2.500 0 0 1 5 0v7a2 2 0 0 1-4 0V5" fill="none" stroke={O} strokeWidth="1.800" /></Ic>
          </RibIcon>
          <RibLabel>Insert</RibLabel>
        </RibBtn>
        <RibBtn>
          <RibIcon>
            <svg width="30" height="31" viewBox="0 0 30 31"><text x="15" y="29" textAnchor="middle" fontFamily="Liberation Sans" fontWeight="700" fontSize="40" fill="#1f95a2">3</text></svg>
          </RibIcon>
          <RibLabel>Commu...</RibLabel>
        </RibBtn>
        <RibBtn>
          <RibIcon>
            <Ic s={32}><circle cx="11" cy="10" r="9" fill="#555" stroke="#222" /><g fill="#ccc"><circle cx="11" cy="4.500" r="2" /><circle cx="6" cy="8" r="2" /><circle cx="16" cy="8" r="2" /><circle cx="7.500" cy="14" r="2" /><circle cx="14.500" cy="14" r="2" /></g><path d="M3 15c3 6 8 7 13 5l4 3" fill="none" stroke="#111" strokeWidth="3" /><path d="M20 0l1 3 3 1-3 1-1 3-1-3-3-1 3-1z" fill="#f2c230" /></Ic>
          </RibIcon>
          <RibLabel>Videos &amp;...</RibLabel>
        </RibBtn>
      </RibbonBody>

      <Main>
        <DockL>
          <GripRow><GripLine $w={34} /><GripLine /></GripRow>
          <DockBody>
            <DarkStrip>
              <ExpandBtn>▶</ExpandBtn>
              <Thumb><ThumbInner /></Thumb>
            </DarkStrip>
            <Explorer>
              <ExpMenu>
                <ExpMenuItem $w={50}>Select</ExpMenuItem>
                <ExpMenuItem $w={57}>Display</ExpMenuItem>
                <ExpMenuItem $w={39}>Edit</ExpMenuItem>
                <ExpMenuItem $w={60}>Customize</ExpMenuItem>
              </ExpMenu>
              <SearchRow>
                <SearchInput />
                <XBox><X size={15} strokeWidth={3} /></XBox>
                <FilterBtn>
                  <Ic s={20}><path d="M2 3h20l-8 10v8l-4 2V13z" fill="#ddd" stroke="#333" /><path d="M22 14h-8M17 10l-4 4 4 4" fill="none" stroke={T} strokeWidth="2.400" /></Ic>
                </FilterBtn>
                <FootSep />
                <SmallIcon $ml={9}><Lock size={15} color="#ddd" strokeWidth={2.4} /></SmallIcon>
                <SmallIcon $ml={6}><Ic s={18}><rect x="2" y="2" width="14" height="5" fill={T} /><path d="M5 7v12h6M5 13h6" fill="none" stroke="#ddd" strokeWidth="1.500" /><rect x="13" y="11" width="5" height="4" fill="#ddd" /><rect x="13" y="17" width="5" height="4" fill="#ddd" /></Ic></SmallIcon>
                <SmallIcon $ml={8}><Ic s={18}><rect x="2" y="2" width="14" height="5" fill="#ddd" /><path d="M5 7v12h6M5 13h6" fill="none" stroke={T} strokeWidth="1.500" /><rect x="13" y="11" width="5" height="4" fill={T} /><rect x="13" y="17" width="5" height="4" fill={T} /></Ic></SmallIcon>
              </SearchRow>
              <ExpBody>
                <IconStrip>
                  {stripIcons.map((ic, i) => <StripBtn key={i} $on>{ic}</StripBtn>)}
                  <StripSep />
                  <StripBtn><Ic s={20}><rect x="4" y="2" width="16" height="20" fill="#ddd" stroke="#222" /><path d="M8 7h9M8 10h7M8 13h9M8 16h5" stroke="#333" strokeWidth="1.200" /></Ic></StripBtn>
                  <StripBtn><Ic s={20}><rect x="4" y="2" width="16" height="20" fill="#d6d6d6" /></Ic></StripBtn>
                  <StripBtn><Ic s={20}><rect x="4" y="2" width="16" height="20" fill="#333" stroke="#ddd" strokeWidth="1.500" /><path d="M8 7h9M8 10h7M8 13h9M8 16h5" stroke="#ddd" strokeWidth="1.200" /></Ic></StripBtn>
                  <StripSep />
                  <StripBtn><Ic s={20}><path d="M2 2h20l-8 9v10l-4-3v-7z" fill="#777" /><Gear x={17} y={17} c="#aaa" /></Ic></StripBtn>
                  <StripBtn><Ic s={20}><path d="M2 2h20l-8 9v11h-4V11z" fill="#ddd" /></Ic></StripBtn>
                  <StripBtn><Ic s={20}><path d="M3 8h4V5h3v3h5V5h3v3h3v13H3z" fill="none" stroke="#ddd" strokeWidth="1.500" /></Ic></StripBtn>
                </IconStrip>
                <Table>
                  <THead>
                    <TH $w={236}>Name (Sorted Ascending)<Caret>▲</Caret></TH>
                    <TH $w={63}>Frozen</TH>
                  </THead>
                  <TMid>
                    <Rows>
                      {rowNames.map((n, i) => {
                        const dim = i > 10;
                        return (
                          <Row key={n} $alt={i % 2 === 1}>
                            <TreeCell>
                              <TreeGuide><TreeDash /></TreeGuide>
                              <EyeWrap>{dim ? eyeOff : eyeOn}</EyeWrap>
                              <Dot />
                            </TreeCell>
                            <NameCell $dim={dim}>Box{n}</NameCell>
                            <FrozenCell><Snowflake size={12} color="#2c2c2c" strokeWidth={2} /></FrozenCell>
                          </Row>
                        );
                      })}
                    </Rows>
                    <VScroll>
                      <VTrackTop><ChevronUp size={13} strokeWidth={3} /></VTrackTop>
                      <VThumb />
                      <VFill />
                      <VTrackTop><ChevronDown size={13} strokeWidth={3} /></VTrackTop>
                    </VScroll>
                  </TMid>
                  <HScroll>
                    <HEnd $w={17}><ChevronLeft size={13} strokeWidth={3} /></HEnd>
                    <HThumb />
                    <VFill />
                    <HEnd $w={17}><ChevronRight size={13} strokeWidth={3} /></HEnd>
                    <HEnd $w={16} />
                  </HScroll>
                </Table>
              </ExpBody>
              <ExpFoot>
                <LayerInput>Design Standard</LayerInput>
                <FootCaret>▼</FootCaret>
                <FootSep />
                <FootBtn><Ic s={18}><path d="M12 2l9 4-9 4-9-4z M3 10l9 4 9-4v2l-9 4-9-4z M3 16l9 4 9-4v2l-9 4-9-4z" fill="#ddd" /></Ic></FootBtn>
                <FootBtn $on><Ic s={20}><rect x="8" y="2" width="8" height="6" fill="none" stroke="#ddd" strokeWidth="1.800" /><path d="M12 8v4M6 16v-4h12v4" fill="none" stroke="#ddd" strokeWidth="1.800" /><rect x="3" y="16" width="6" height="5" fill="none" stroke="#ddd" strokeWidth="1.800" /><rect x="15" y="16" width="6" height="5" fill="none" stroke="#ddd" strokeWidth="1.800" /></Ic></FootBtn>
                <FootSep />
                <FootText>Selection Set:</FootText>
                <FootMore>»</FootMore>
              </ExpFoot>
            </Explorer>
          </DockBody>
        </DockL>

        <Viewport>
          <VpSvg viewBox="378 167 1052 732">
            <g stroke="#5f5f5f" strokeWidth="1">
              {gridX.map(x => <line key={x} x1={x} y1={309} x2={x + 1} y2={795} />)}
              {gridY.map(y => <line key={y} x1={627} y1={y} x2={1115} y2={y} />)}
            </g>
            <line x1="871" y1="309" x2="872" y2="795" stroke="#000" />
            <line x1="627" y1="554" x2="1115" y2="552" stroke="#000" />
            <rect x="1113" y="295" width="6" height="500" fill="#000" />
            <polygon points="633,297 641,296 643,793 635,808" fill="#5a7282" />
            <polygon points="628,297 633,296 635,808 630,808" fill="#9cbcd8" />
            <rect x="637" y="388" width="2" height="45" fill="#000" />
            <rect x="638" y="707" width="2.500" height="48" fill="#000" />
            <line x1="1116" y1="388" x2="1116" y2="433" stroke="#444" />
            <line x1="1117" y1="709" x2="1117" y2="755" stroke="#444" />
            <polygon points="633,299 1120,297 1120,303 633,304.500" fill="#a3c0da" />
            <polygon points="1119,295 1124,296 1124,807 1120,807" fill="#9cbcd8" />
            <rect x="925" y="304" width="3" height="108" fill="#5f96c6" />
            <polygon points="822,408 925,408 927,409 925,413 822,413" fill="#5f96c6" />
            <rect x="822" y="412" width="4" height="33" fill="#5f96c6" />
            <polygon points="822,445 825,446 808,520 804,520" fill="#84c6bd" />
            <rect x="926" y="414" width="4" height="72" fill="#84c6bd" />
            <polygon points="933,477 1112,477 1115,481 930,482" fill="#4a7da5" />
            <rect x="930" y="482" width="185" height="5.500" fill="#5f98c8" />
            <rect x="927" y="487" width="4.500" height="113" fill="#639ccb" />
            <polygon points="643,534 805,534 805,540 639,540" fill="#4a7da5" />
            <rect x="639" y="540" width="166" height="5.500" fill="#5f98c8" />
            <rect x="804" y="520" width="6" height="116" fill="#5c94c4" />
            <rect x="808" y="520" width="2" height="116" fill="#4b7faa" />
            <polygon points="807,674 811,674 811,683 805,683" fill="#4a7da5" />
            <rect x="805" y="683" width="6" height="113" fill="#5f98c8" />
            <line x1="836" y1="303" x2="818" y2="342" stroke="#7a6548" strokeWidth="4" />
            <line x1="820" y1="368" x2="831" y2="410" stroke="#7d6a4a" strokeWidth="4" />
            <polygon points="642,793 1110,791 1116,807 633,809" fill="#7b94a9" />
            <polygon points="633,809 1116,807 1116,816 633,818" fill="#a0bed8" />
            <rect x="805" y="790" width="6" height="6" fill="#5f98c8" />
            <polygon points="855,792 896,792 896,802 854,801" fill="#000" />
            <rect x="725" y="798" width="43" height="2" fill="#000" />
            <rect x="1027" y="801" width="43" height="2" fill="#000" />
            <rect x="1068" y="791" width="42" height="2" fill="#000" />
            <polygon points="843,818 910,818 897,823 855,823" fill="#000" />
            <rect x="1341" y="204" width="53" height="53" fill="#808080" />
            <rect x="1351" y="214" width="34" height="33" fill="#77787a" />
            <g transform="rotate(180 1368 230.500)">
              <text x="1368" y="235" textAnchor="middle" fontFamily="Liberation Sans" fontSize="13" fontWeight="700" fill="#5d5e60">TOP</text>
            </g>
            <line x1="382" y1="874" x2="402" y2="874" stroke="#c01515" />
            <line x1="402" y1="874" x2="402" y2="898" stroke="#158a25" />
            <text x="379" y="877" fontSize="9" fill="#c01515" fontFamily="Liberation Sans">x</text>
            <text x="401" y="877" fontSize="9" fill="#2a2ac8" fontFamily="Liberation Sans">z</text>
            <text x="400" y="899" fontSize="9" fill="#158a25" fontFamily="Liberation Sans">y</text>
          </VpSvg>
          <VpLabel>[+] [Perspective ] [Standard ] [Default Shading ]</VpLabel>
        </Viewport>

        <Panel>
          <GripRow><GripLine /></GripRow>
          <PanelTabs>
            <PanelTab $on><Plus size={22} color="#ddd" strokeWidth={2} /></PanelTab>
            <PanelTab><Ic s={20}><rect x="3" y="3" width="18" height="18" fill="none" stroke="#2d8a90" strokeWidth="1.200" /><path d="M5 19C7 9 10 6 19 5" fill="none" stroke="#999" strokeWidth="1.500" /></Ic></PanelTab>
            <PanelTab><Ic s={20}><rect x="7" y="2" width="10" height="5" fill="#999" /><path d="M12 7v5M5 16v-4h14v4" fill="none" stroke="#2d8a90" strokeWidth="1.500" /><rect x="2" y="16" width="6" height="5" fill="none" stroke="#2d8a90" strokeWidth="1.500" /><rect x="16" y="16" width="6" height="5" fill="none" stroke="#2d8a90" strokeWidth="1.500" /></Ic></PanelTab>
            <PanelTab><Ic s={20}><circle cx="8" cy="12" r="7" fill="none" stroke="#2d8a90" strokeWidth="1.200" /><circle cx="15" cy="12" r="8" fill="#999" /></Ic></PanelTab>
            <PanelTab><Monitor size={20} color="#999" fill="#999" /></PanelTab>
            <PanelTab><Wrench size={18} color="#888" fill="#888" /></PanelTab>
          </PanelTabs>
          <PanelBody>
            <SubIcons>
              <SubIcon $on><Ic s={18}><circle cx="12" cy="12" r="10" fill="#ddd" stroke="#222" /></Ic></SubIcon>
              <SubIcon><Ic s={18}><circle cx="9" cy="9" r="7" fill="#ddd" stroke="#333" /><rect x="9" y="9" width="12" height="12" fill="#ddd" stroke="#333" /></Ic></SubIcon>
              <SubIcon><Ic s={17}><path d="M12 1a8 8 0 0 1 5 14v3H7v-3a8 8 0 0 1 5-14z" fill="#ddd" /><rect x="8" y="19" width="8" height="3" fill="#ddd" /></Ic></SubIcon>
              <SubIcon><Ic s={18}><rect x="2" y="5" width="15" height="14" rx="2" fill="#ddd" /><path d="M17 10l5-3v10l-5-3z" fill="#ddd" /></Ic></SubIcon>
              <SubIcon><Ic s={18}><path d="M3 2l19 20H3z" fill="#ddd" /><path d="M7 11l6 7H7z" fill="#444" /></Ic></SubIcon>
              <SubIcon><Ic s={18}><g fill="none" stroke="#ddd" strokeWidth="1.800"><path d="M2 6c5-3 7 3 10 1s6-3 10-1" /><path d="M2 12c5-3 7 3 10 1s6-3 10-1" /><path d="M2 18c5-3 7 3 10 1s6-3 10-1" /></g></Ic></SubIcon>
              <SubIcon><Settings size={11} color="#ddd" /><Settings size={9} color="#ddd" /></SubIcon>
            </SubIcons>
            <TypeCombo>Standard Primitives<Caret>▼</Caret></TypeCombo>
            <RollArea>
              <RollCol>
                <Rollout $h={167} $mt={5}>
                  <RollHead><RollTri>▼</RollTri>Object Type<RollDots /></RollHead>
                  <AutoGrid><Check />AutoGrid</AutoGrid>
                  <PrimGrid>{prims.map(p => <Prim key={p}>{p}</Prim>)}</PrimGrid>
                </Rollout>
                <Rollout $h={56} $mt={3}>
                  <RollHead><RollTri>▼</RollTri>Name and Color<RollDots /></RollHead>
                  <NameRow><NameInput /><Swatch /></NameRow>
                </Rollout>
              </RollCol>
              <RollScroll />
            </RollArea>
          </PanelBody>
        </Panel>
      </Main>

      <SliderRow>
        <SlideBtn $w={14}>&lt;</SlideBtn>
        <SlideBtn $w={123}>0 / 1800</SlideBtn>
        <SlideBtn $w={14}>&gt;</SlideBtn>
      </SliderRow>
      <TrackRow>
        <TrackLeft>
          <Ic s={18}><path d="M2 7h5M2 10h5M2 13h5M2 16h5" stroke="#ccc" strokeWidth="1" /><path d="M8 18c2-12 5-12 7-4s4 2 6-4" fill="none" stroke={T} strokeWidth="1.500" /></Ic>
        </TrackLeft>
        <TrackSvg viewBox="0 0 1572 24">
          <rect x="0" y="0" width="8" height="24" fill="#7b7020" />
          {ticks.map(i => (
            <line key={i} x1={4 + i * 17.39} y1={1} x2={4 + i * 17.39} y2={i % 5 === 0 ? 24 : 11} stroke="#7a7a7a" />
          ))}
          {ticks.filter(i => i % 5 === 0).map(i => (
            <text key={i} x={4 + i * 17.39} y={21.5} textAnchor="middle" fontFamily={UI} fontSize="11" fill={i === 0 ? '#d8d060' : '#bdbdbd'}>{i * 20}</text>
          ))}
        </TrackSvg>
      </TrackRow>

      <Status>
        <Listener>
          <Pink />
          <Mini><MiniText>MAXScript Mini</MiniText></Mini>
        </Listener>
        <StatSep />
        <Info>
          <div>None Selected</div>
          <div>Rendering Time&nbsp; 0:00:00</div>
        </Info>
        <Coord>
          <CoordRow>
            <CoordIcon><Ic s={18}><path d="M2 6V2h4M18 2h4v4M22 18v4h-4M6 22H2v-4" fill="none" stroke="#999" strokeWidth="1.500" /><rect x="7" y="7" width="10" height="10" fill="none" stroke="#888" strokeWidth="1.500" /></Ic></CoordIcon>
            <CoordIcon><Lock size={15} color="#8a8a8a" strokeWidth={2} /></CoordIcon>
            <CoordIcon><Ic s={16}><rect x="2" y="2" width="20" height="20" fill="#ddd" stroke="#222" /><circle cx="12" cy="12" r="5" fill="none" stroke="#222" strokeWidth="2.500" /><path d="M12 2v5M12 17v5M2 12h5M17 12h5" stroke="#222" strokeWidth="1.500" /></Ic></CoordIcon>
            <CoordLabel>X:</CoordLabel><CoordField>59.878</CoordField>
            <CoordLabel $ml={14}>Y:</CoordLabel><CoordField>-43.062</CoordField>
            <CoordLabel $ml={13}>Z:</CoordLabel><CoordField>0.0</CoordField>
            <GridLabel $ml={14}>Grid = 10.0</GridLabel>
          </CoordRow>
          <CoordRow2>
            <TagSep />
            <CoordIcon><Ic s={15}><path d="M12 2l9 5v10l-9 5-9-5V7zM3 7l9 5 9-5M12 12v10" fill="none" stroke="#bbb" strokeWidth="1.500" /></Ic></CoordIcon>
            <GridLabel $ml={0}>Add Time Tag</GridLabel>
          </CoordRow2>
        </Coord>
        <Play>
          <PlayRow>
            <PlayBtn $w={18}><Play1 d="M3 4h3v16H3zM15 5v14L7 12zM23 5v14l-8-7z" /></PlayBtn>
            <TagSep $ml={5} />
            <PlayBtn $w={24}><Play1 d="M10 5v14L2 12zM13 4h3v16h-3zM19 4h3v16h-3z" /></PlayBtn>
            <PlayBtn $w={20}><Ic s={20}><path d="M4 2l17 10L4 22z" fill={C} /></Ic></PlayBtn>
            <PlayBtn $w={26}><Play1 d="M2 4h3v16H2zM8 4h3v16H8zM14 5v14l8-7z" /></PlayBtn>
            <TagSep $ml={1} />
            <PlayBtn $w={24}><Play1 d="M2 5v14l8-7zM10 5v14l8-7zM19 4h3v16h-3z" /></PlayBtn>
          </PlayRow>
          <PlayRow2>
            <PlayBtn $w={20}><Play1 d="M10 5v14l-8-7zM14 5v14l8-7z" /></PlayBtn>
            <TagSep $ml={4} />
            <Spin>0<Caret>⇕</Caret></Spin>
            <PlayBtn $w={28}><Ic s={17}><circle cx="10" cy="10" r="8" fill="#ddd" /><path d="M10 5v5h4" stroke="#333" fill="none" strokeWidth="1.500" /><Gear x={18} y={18} /></Ic></PlayBtn>
          </PlayRow2>
        </Play>
        <KeyBig>
          <Ic s={34}><path d="M9 3h6v6h7v6h-7v6H9v-6H2V9h7z" fill="#d8d8d8" stroke="#333" strokeWidth=".5" /><g transform="translate(10 11) scale(.55)"><circle cx="6" cy="17" r="5" fill="none" stroke={T} strokeWidth="3.500" /><path d="M10 13l11-9M16 8l3 4M20 5l2 3" stroke={T} strokeWidth="3.500" fill="none" /></g></Ic>
        </KeyBig>
        <KeyCol>
          <KeyBtn>Auto Key</KeyBtn>
          <KeyBtn>Set Key</KeyBtn>
        </KeyCol>
        <SelCol>
          <SelCombo>Selected<Caret>▼</Caret></SelCombo>
          <SelRow>
            <CurveBtn><Ic s={18}><path d="M5 22C5 12 6 8 9 6M19 22c0-10-1-14-4-16" fill="none" stroke={T} strokeWidth="2" /><rect x="10" y="2" width="4" height="4" fill="none" stroke="#ddd" /><circle cx="6" cy="5" r="1" fill="#ddd" /><circle cx="18" cy="5" r="1" fill="#ddd" /></Ic><Corner /></CurveBtn>
            <KeyFilters>Key Filters...</KeyFilters>
          </SelRow>
        </SelCol>
        <Nav>
          <NavBtn><Search size={17} color="#ddd" strokeWidth={2.2} /></NavBtn>
          <NavBtn><Ic s={19}><circle cx="7" cy="14" r="5" fill="none" stroke="#ddd" strokeWidth="1.800" /><path d="M3 22l2-4" stroke="#ddd" strokeWidth="2" /><g fill={T}><rect x="11" y="2" width="5" height="5" /><rect x="17" y="2" width="5" height="5" /><rect x="17" y="8" width="5" height="5" /></g></Ic><Corner /></NavBtn>
          <NavBtn><Ic s={20}><path d="M2 7V2h5M17 2h5v5M22 17v5h-5M7 22H2v-5" fill="none" stroke="#ddd" strokeWidth="1.800" /><path d="M12 6l6 3v6l-6 3-6-3V9z" fill={T} /></Ic></NavBtn>
          <NavBtn><Ic s={20}><path d="M15 2l6 3v9l-6 3-6-3V5z" fill={T} /><g fill="#ddd"><rect x="2" y="11" width="4" height="4" transform="rotate(45 4 13)" /><rect x="9" y="18" width="4" height="4" transform="rotate(45 11 20)" /></g></Ic><Corner /></NavBtn>
          <NavBtn><Ic s={20}><path d="M3 3l18 9-16 7z M3 3l2 16" fill="none" stroke="#ddd" strokeWidth="1.800" /><path d="M5 12h6" stroke="#ddd" strokeWidth="1.800" /></Ic><Corner /></NavBtn>
          <NavBtn $on><Ic s={20}><path d="M6 12V6a1.500 1.500 0 0 1 3 0V3.500a1.500 1.500 0 0 1 3 0V4a1.500 1.500 0 0 1 3 0v2a1.500 1.500 0 0 1 3 0v9c0 4-3 7-6 7-4 0-5-2-7-5l-2-4c-1-2 1-3 3 0z" fill="#f0f0f0" stroke="#444" strokeWidth=".6" /></Ic></NavBtn>
          <NavBtn><Ic s={20}><circle cx="12" cy="12" r="8" fill="#ddd" /><path d="M12 4a8 8 0 0 1 8 8h-8z" fill={T} /><path d="M2 18C8 18 18 10 22 5" stroke="#ddd" strokeWidth="1.500" fill="none" /></Ic><Corner /></NavBtn>
          <NavBtn><Ic s={20}><rect x="2" y="2" width="20" height="20" fill="#ddd" /><rect x="2" y="12" width="10" height="10" fill="#333" /><path d="M11 13l7-7M13 6h5v5" stroke="#333" strokeWidth="1.800" fill="none" /></Ic></NavBtn>
        </Nav>
      </Status>

      <Taskbar>
        <Start>
          <Ic s={17}><path d="M1 4l9-1.300v9H1zM11 2.500L23 1v11H11zM1 13h9v8.500L1 20zM11 13h12v10l-12-1.600z" fill="#fff" /></Ic>
        </Start>
        <SearchBox>
          <Ic s={18}><circle cx="14" cy="9" r="7" fill="none" stroke="#222" strokeWidth="1.500" /><path d="M9 14l-7 8" stroke="#222" strokeWidth="1.800" /></Ic>
          Type here to search
        </SearchBox>
        <TaskItem $w={50}>
          <Ic s={18}><g fill="none" stroke="#fff" strokeWidth="1.500"><path d="M3 2v2h13V2M3 22v-2h13v2" /><rect x="3" y="7" width="13" height="10" /></g><rect x="19" y="6" width="3" height="3" fill="#fff" /><rect x="19" y="11" width="3" height="3" fill="#fff" /></Ic>
        </TaskItem>
        <TaskItem $w={50}>
          <svg width="26" height="26" viewBox="0 0 26 26"><circle cx="13" cy="13" r="12" fill="#1173c9" /><path d="M1 13A12 12 0 0 1 25 13c0 3-3 5-6 4 1-6-5-9-9-7-4 2-4 7 0 10 2 2 4 3 7 3a12 12 0 0 1-16-10z" fill="#35c1d6" /><path d="M25 13c0 3-3 5-6 4 0-4-3-7-6-7 3-3 6-5 6-5 3 1 6 4 6 8z" fill="#7fdc6d" /></svg>
        </TaskItem>
        <TaskItem $w={5} />
        <TaskItem $w={40} $run>
          <svg width="24" height="24" viewBox="0 0 24 24"><path d="M1 3h9l2 2h-11z" fill="#d9a01b" /><rect x="1" y="5" width="22" height="17" fill="#ffd65c" /><rect x="5" y="14" width="14" height="8" fill="#2b86d0" /><rect x="9" y="18" width="6" height="4" fill="#ffd65c" /></svg>
        </TaskItem>
        <TaskItem $w={5} />
        <TaskItem $w={48} $on $run>
          <Logo3Big>3<MaxTag>MAX</MaxTag></Logo3Big>
        </TaskItem>
        <TaskItem $w={5} />
        <TaskItem $w={40} $run>
          <svg width="24" height="24" viewBox="0 0 24 24"><circle cx="12" cy="12" r="11.500" fill="#e94235" /><path d="M12 12L2 18A11.500 11.500 0 0 0 14 23.300z" fill="#34a853" /><path d="M12 7h10.500A11.500 11.500 0 0 1 14 23.300z" fill="#fbbc04" /><circle cx="12" cy="12" r="5.500" fill="#fff" /><circle cx="12" cy="12" r="4.300" fill="#4285f4" /></svg>
        </TaskItem>
        <Tray>
          <TrayIcon><ChevronUp size={18} color="#fff" strokeWidth={1.3} /></TrayIcon>
          <TrayIcon><Ic s={18}><rect x="6" y="4" width="17" height="12" fill="none" stroke="#fff" /><rect x="1" y="2" width="6" height="6" fill="#1a2a47" stroke="#fff" /><path d="M11 20h8M15 16v4" stroke="#fff" /></Ic></TrayIcon>
          <TrayIcon><Ic s={18}><path d="M3 9h4l5-4v14l-5-4H3z" fill="none" stroke="#fff" /><path d="M16 10l5 5M21 10l-5 5" stroke="#fff" /></Ic></TrayIcon>
          <Clock>9:41 AM<br />5/18/2021</Clock>
        </Tray>
      </Taskbar>
      <Snip><SnipShade /><SnipText>Full-screen Snip</SnipText></Snip>
    </Page>
  );
}
